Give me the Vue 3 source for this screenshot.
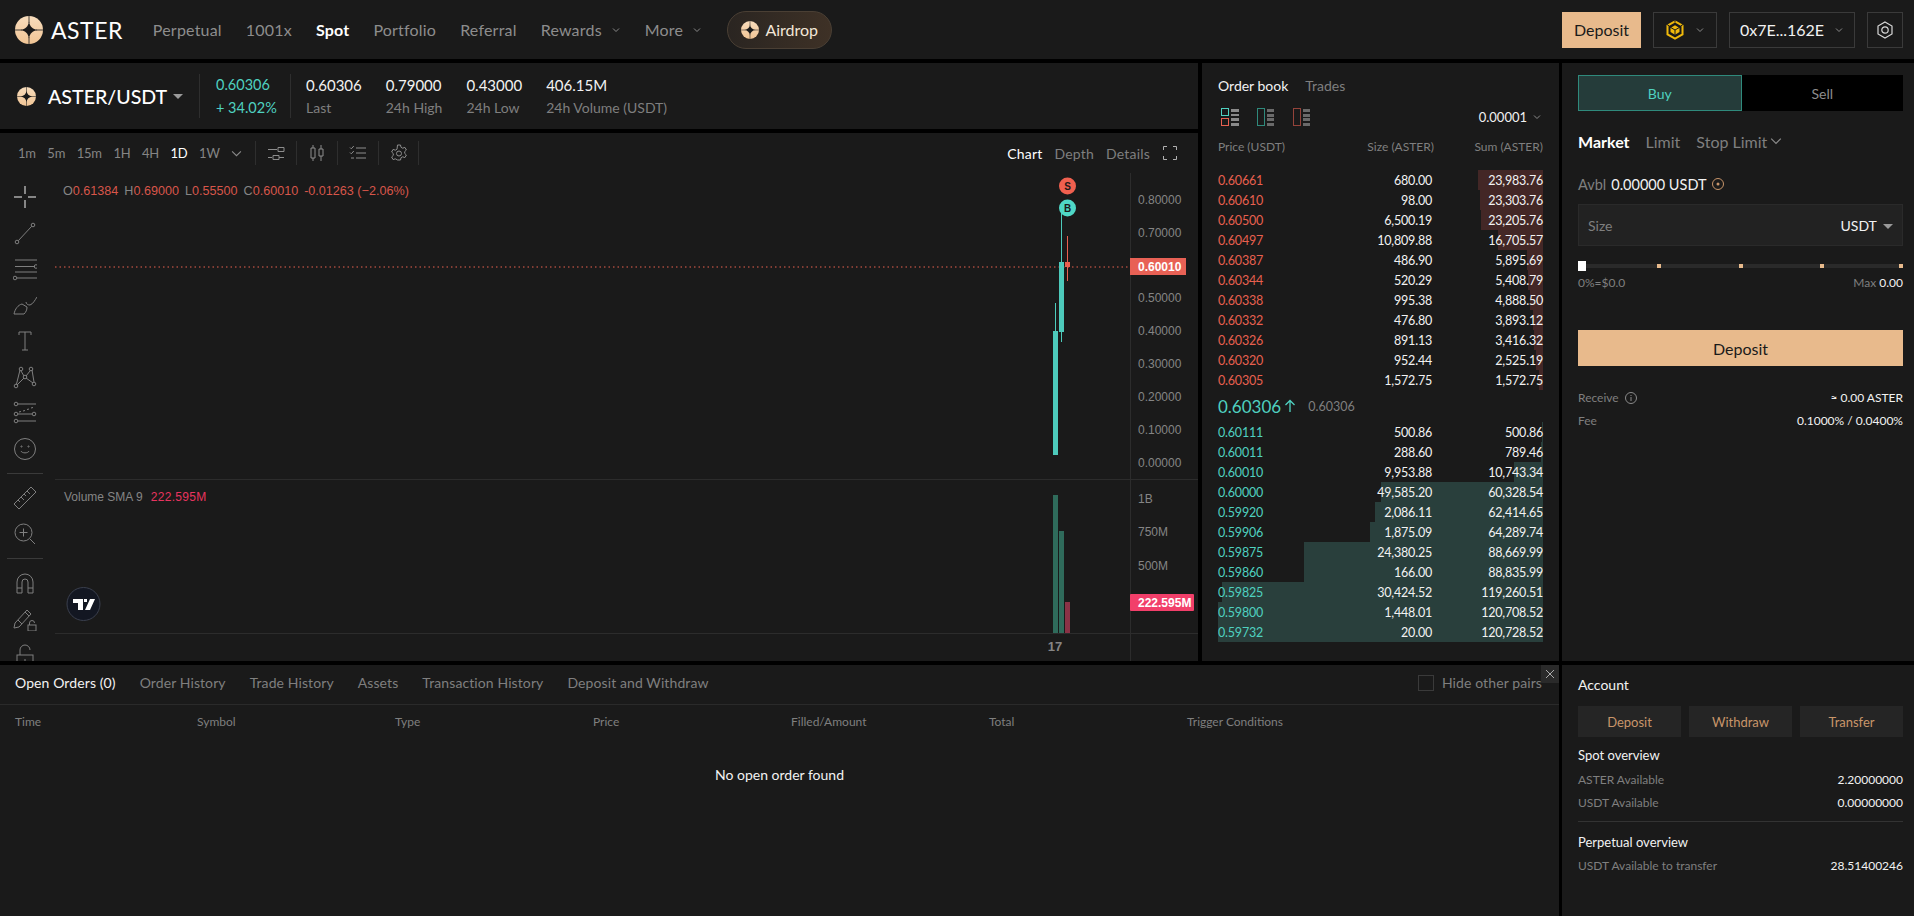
<script setup>
const navItems = [
  { label: 'Perpetual' },
  { label: '1001x' },
  { label: 'Spot', active: true },
  { label: 'Portfolio' },
  { label: 'Referral' },
  { label: 'Rewards', chevron: true },
  { label: 'More', chevron: true }
]

const tickerStats = [
  { value: '0.60306', label: 'Last' },
  { value: '0.79000', label: '24h High' },
  { value: '0.43000', label: '24h Low' },
  { value: '406.15M', label: '24h Volume (USDT)' }
]

const intervals = ['1m', '5m', '15m', '1H', '4H', '1D', '1W']

const priceAxis = [
  { label: '0.80000', y: 200 },
  { label: '0.70000', y: 233 },
  { label: '0.50000', y: 298 },
  { label: '0.40000', y: 331 },
  { label: '0.30000', y: 364 },
  { label: '0.20000', y: 397 },
  { label: '0.10000', y: 430 },
  { label: '0.00000', y: 463 }
]
const volumeAxis = [
  { label: '1B', y: 499 },
  { label: '750M', y: 532 },
  { label: '500M', y: 566 }
]

const maxSum = 120728.52
const asks = [
  ['0.60661', '680.00', '23,983.76'],
  ['0.60610', '98.00', '23,303.76'],
  ['0.60500', '6,500.19', '23,205.76'],
  ['0.60497', '10,809.88', '16,705.57'],
  ['0.60387', '486.90', '5,895.69'],
  ['0.60344', '520.29', '5,408.79'],
  ['0.60338', '995.38', '4,888.50'],
  ['0.60332', '476.80', '3,893.12'],
  ['0.60326', '891.13', '3,416.32'],
  ['0.60320', '952.44', '2,525.19'],
  ['0.60305', '1,572.75', '1,572.75']
]
const bids = [
  ['0.60111', '500.86', '500.86'],
  ['0.60011', '288.60', '789.46'],
  ['0.60010', '9,953.88', '10,743.34'],
  ['0.60000', '49,585.20', '60,328.54'],
  ['0.59920', '2,086.11', '62,414.65'],
  ['0.59906', '1,875.09', '64,289.74'],
  ['0.59875', '24,380.25', '88,669.99'],
  ['0.59860', '166.00', '88,835.99'],
  ['0.59825', '30,424.52', '119,260.51'],
  ['0.59800', '1,448.01', '120,708.52'],
  ['0.59732', '20.00', '120,728.52']
]

function barWidth(sum) {
  return (parseFloat(sum.replace(/,/g, '')) / maxSum) * 100 + '%'
}

const bottomTabs = ['Open Orders (0)', 'Order History', 'Trade History', 'Assets', 'Transaction History', 'Deposit and Withdraw']
const orderColumns = ['Time', 'Symbol', 'Type', 'Price', 'Filled/Amount', 'Total', 'Trigger Conditions']
</script>

<template>
  <div class="page">
    <svg class="sprite">
      <defs>
        <linearGradient id="asterFill" x1="0" y1="0" x2="0" y2="1">
          <stop offset="0" stop-color="#f7dcbc" />
          <stop offset="1" stop-color="#f1c595" />
        </linearGradient>
      </defs>
      <symbol id="asterLogo" viewBox="0 0 28 28">
        <circle cx="14" cy="14" r="14" fill="url(#asterFill)" />
        <path d="M14 5.5C14.8 10.500 17.500 13.200 22.500 14 17.500 14.800 14.800 17.500 14 22.500 13.200 17.500 10.500 14.800 5.500 14 10.500 13.200 13.200 10.500 14 5.500Z" fill="#1a1a1a" />
        <path d="M14 0V7M14 21V28M0 14H7M21 14H28" stroke="#1a1a1a" stroke-width=".8" />
      </symbol>
    </svg>

    <header class="topbar">
      <svg class="logo"><use href="#asterLogo" /></svg>
      <span class="brand">ASTER</span>
      <nav class="nav">
        <a v-for="item in navItems" :key="item.label" class="nav-item" :class="{ active: item.active }">
          {{ item.label }}
          <svg v-if="item.chevron" class="chev" viewBox="0 0 10 10"><path d="M2 3.5l3 3 3-3" /></svg>
        </a>
      </nav>
      <div class="airdrop">
        <svg class="airdrop-logo"><use href="#asterLogo" /></svg>
        Airdrop
      </div>
      <div class="top-right">
        <button class="top-btn-primary">Deposit</button>
        <button class="top-btn bnb">
          <svg class="bnb-icon" viewBox="0 0 20 20">
            <path d="M10 1.3l7.500 4.300v8.800L10 18.700l-7.500-4.300V5.600z" fill="none" stroke="#f0b90b" stroke-width="2" />
            <path d="M10 5.300l4.500 2.600v4.200L10 14.700l-4.500-2.600V7.900z" fill="#f0b90b" />
            <path d="M10 10v5M10 10L5.500 7.400M10 10l4.500-2.600" stroke="#1a1a1a" stroke-width="1" fill="none" />
            <path d="M10 0v2.500M2 4.500l2.200 1.400M18 4.500l-2.200 1.400" stroke="#1a1a1a" stroke-width="1" />
          </svg>
          <svg class="chev" viewBox="0 0 10 10"><path d="M2 3.5l3 3 3-3" /></svg>
        </button>
        <button class="top-btn wallet">
          0x7E...162E
          <svg class="chev" viewBox="0 0 10 10"><path d="M2 3.5l3 3 3-3" /></svg>
        </button>
        <button class="top-btn gear">
          <svg viewBox="0 0 18 18" width="18" height="18" fill="none" stroke="#d8d8d8" stroke-width="1.2">
            <path d="M9 1l7 4v8l-7 4-7-4V5z" />
            <circle cx="9" cy="9" r="3.2" />
          </svg>
        </button>
      </div>
    </header>

    <div class="workspace">
      <div class="left-col">
        <section class="ticker">
          <div class="pair">
            <svg class="pair-logo"><use href="#asterLogo" /></svg>
            <span class="pair-name">ASTER/USDT</span>
            <span class="tri"></span>
          </div>
          <div class="change">
            <span class="up">0.60306</span>
            <span class="up">+ 34.02%</span>
          </div>
          <div class="stats">
            <div v-for="s in tickerStats" :key="s.label" class="stat">
              <span class="stat-val">{{ s.value }}</span>
              <span class="stat-label">{{ s.label }}</span>
            </div>
          </div>
        </section>

        <section class="chart">
          <div class="chart-top">
            <div class="intervals">
              <span v-for="i in intervals" :key="i" class="interval" :class="{ active: i === '1D' }">{{ i }}</span>
              <svg class="chev interval-chev" viewBox="0 0 10 10"><path d="M1 3l4 4 4-4" /></svg>
            </div>
            <div class="tool-cell">
              <svg viewBox="0 0 18 18" class="ti"><path d="M1 5.5h9M1 13.5h4M11 3.5h6v4h-6zM6 11.5h6v4H6zM12 13.5h5" /></svg>
            </div>
            <div class="tool-cell">
              <svg viewBox="0 0 18 18" class="ti"><path d="M5 1v3M3 4h4v10H3zM5 14v3M13 1v4M11 5h4v7h-4zM13 12v5" /></svg>
            </div>
            <div class="tool-cell">
              <svg viewBox="0 0 18 18" class="ti"><path d="M1 3.5l1.300 1.300L4.800 2M7 4h10M1 8.500l1.300 1.300L4.800 7M7 9h10M2 14h3M7 14h10" /></svg>
            </div>
            <div class="tool-cell">
              <svg viewBox="0 0 18 18" class="ti"><path d="M7.5 1h3l.5 2.300 1.700.9 2.200-.8 1.500 2.600-1.700 1.600v1.800l1.700 1.600-1.500 2.600-2.200-.8-1.700.9-.5 2.300h-3L7 15.700l-1.700-.9-2.200.8-1.500-2.600 1.700-1.600V9.600L1.600 8 3.100 5.400l2.200.8L7 5.300z" /><circle cx="9" cy="9.500" r="2.500" /></svg>
            </div>
            <div class="view-tabs">
              <span class="view-tab active">Chart</span>
              <span class="view-tab">Depth</span>
              <span class="view-tab">Details</span>
              <svg viewBox="0 0 14 14" class="fullscreen"><path d="M.5 4V.5H4M10 .5h3.500V4M13.500 10v3.500H10M4 13.500H.5V10" /></svg>
            </div>
          </div>

          <div class="chart-body">
            <div class="draw-tools">
              <svg viewBox="0 0 24 24" class="dt cross"><path d="M12 1v8M12 15v8M1 12h8M15 12h8" /></svg>
              <svg viewBox="0 0 24 24" class="dt"><circle cx="4" cy="21" r="1.800"/><circle cx="20" cy="4" r="1.800"/><path d="M5.300 19.700L18.700 5.300" /></svg>
              <svg viewBox="0 0 24 24" class="dt"><path d="M2 3h22M2 9.500h20M2 15h22M4 21h20" /><circle cx="23" cy="9.500" r="1.800"/><circle cx="2" cy="21" r="1.800"/></svg>
              <svg viewBox="0 0 24 24" class="dt"><path d="M1 21c1-5 4-9 8-10l5 3c0 3-1 5-3 7zM13 9c0 2 2 3 4 3 3-1 5-5 7-8" /></svg>
              <svg viewBox="0 0 24 24" class="dt"><path d="M6 6V3h12v3M12 3v18M9 21h6" /></svg>
              <svg viewBox="0 0 24 24" class="dt"><circle cx="8" cy="4" r="1.800"/><circle cx="18" cy="4" r="1.800"/><circle cx="12" cy="12" r="1.800"/><circle cx="3" cy="21" r="1.800"/><circle cx="21" cy="19" r="1.800"/><path d="M8 6l3 5M17 6l-4 5M7 5L3.500 19M19 5l2 12M4 20l7-7M20 18l-7-5" /></svg>
              <svg viewBox="0 0 24 24" class="dt"><circle cx="3" cy="3" r="1.800"/><circle cx="3" cy="13" r="1.800"/><circle cx="21" cy="13" r="1.800"/><circle cx="3" cy="20" r="1.800"/><path d="M5 3h18M5 13h14M5 20h18M6 11l2-.5M10 10l2-.5M14 8.500l2-.5M18 7l2-.5" /></svg>
              <svg viewBox="0 0 24 24" class="dt"><circle cx="12" cy="12" r="10.500"/><circle cx="8.500" cy="9.500" r=".6"/><circle cx="15.500" cy="9.500" r=".6"/><path d="M8 14c1 2.500 7 2.500 8 0" /></svg>
              <div class="dt-sep"></div>
              <svg viewBox="0 0 24 24" class="dt"><path d="M1 18L18 1l5 5L6 23zM5 14l2 2M8 11l3 3M11 8l2 2M14 5l3 3" /></svg>
              <svg viewBox="0 0 24 24" class="dt"><circle cx="10.500" cy="10.500" r="8.500"/><path d="M10.500 6.500v8M6.500 10.500h8M17 17l5 5" /></svg>
              <div class="dt-sep"></div>
              <svg viewBox="0 0 24 24" class="dt"><path d="M4 22v-11a8 8 0 0 1 16 0v11h-5V11a3 3 0 0 0-6 0v11zM4 17h5M15 17h5" /></svg>
              <svg viewBox="0 0 24 24" class="dt"><path d="M2 16L14 3l4 4L6 20l-5 1zM5 13l4 4M12 5l4 4" /><rect x="15" y="18" width="8" height="6"/><path d="M16.500 18v-2a2.500 2.500 0 0 1 5 0" /></svg>
              <svg viewBox="0 0 24 24" class="dt"><rect x="4" y="12" width="16" height="12"/><path d="M7 12V7a5 5 0 0 1 10 0M12 16v4" /></svg>
            </div>

            <svg class="plot" width="1143" height="528" viewBox="55 133 1143 528">
              <path d="M55 479.500H1198M55 633.500H1198M1130.500 173V661" stroke="#2c2c2c" fill="none" />
              <path d="M55 267H1130" stroke="#e8604f" stroke-dasharray="1.500 3" fill="none" />

              <text x="63" y="195" class="ohlc"><tspan class="k">O</tspan><tspan class="v">0.61384</tspan><tspan class="k" dx="6">H</tspan><tspan class="v">0.69000</tspan><tspan class="k" dx="6">L</tspan><tspan class="v">0.55500</tspan><tspan class="k" dx="6">C</tspan><tspan class="v">0.60010</tspan><tspan class="v" dx="6">-0.01263 (−2.06%)</tspan></text>
              <text x="64" y="501" class="vol"><tspan class="k">Volume SMA 9</tspan><tspan class="pink" dx="8">222.595M</tspan></text>

              <!-- candles -->
              <rect x="1055" y="303" width="1" height="28" fill="#4dcabb" />
              <rect x="1053" y="331" width="5" height="124" fill="#4dcabb" />
              <rect x="1061" y="212" width="1" height="130" fill="#4dcabb" />
              <rect x="1059" y="262" width="5" height="70" fill="#4dcabb" />
              <rect x="1067" y="236" width="1" height="45" fill="#e8604f" />
              <rect x="1065" y="262" width="5" height="5" fill="#e8604f" />

              <circle cx="1067.500" cy="186" r="8.500" fill="#f0604f" />
              <text x="1067.500" y="190" class="mark">S</text>
              <circle cx="1067.500" cy="208" r="8.500" fill="#4fd8c6" />
              <text x="1067.500" y="212" class="mark">B</text>

              <!-- volume -->
              <rect x="1053" y="495" width="5" height="138" fill="#2f6b5b" />
              <rect x="1059" y="531" width="5" height="102" fill="#2f6b5b" />
              <rect x="1065" y="602" width="5" height="31" fill="#8a3246" />

              <text v-for="p in priceAxis" :key="p.label" x="1138" :y="p.y + 4" class="axis">{{ p.label }}</text>
              <text v-for="p in volumeAxis" :key="p.label" x="1138" :y="p.y + 4" class="axis">{{ p.label }}</text>

              <rect x="1130" y="258" width="56" height="17" fill="#e86155" />
              <text x="1138" y="271" class="flag">0.60010</text>
              <rect x="1130" y="594" width="64" height="17" rx="1" fill="#f23f6a" />
              <text x="1138" y="607" class="flag">222.595M</text>

              <text x="1055" y="651" class="time">17</text>

              <circle cx="83.500" cy="604" r="16.500" fill="#131722" stroke="#3a3f4d" />
              <path d="M73 599h10v11h-5v-7h-5zM84 599h3v3h-3zM90 599h5l-5 11h-5z" fill="#fff" />
              <path d="M51 586l-3 3 3 3" fill="none" stroke="#9a9a9a" />
            </svg>
          </div>
        </section>
      </div>

      <section class="book">
        <div class="book-tabs">
          <span class="book-tab active">Order book</span>
          <span class="book-tab">Trades</span>
        </div>
        <div class="book-tools">
          <svg class="book-ico" viewBox="0 0 18 18">
            <rect x=".5" y=".5" width="7" height="7" fill="none" stroke="#4fd1c0" />
            <rect x=".5" y="10.500" width="7" height="7" fill="none" stroke="#e8604f" />
            <path d="M10 1h8v3h-8zM10 6h8v2h-8zM10 10h8v3h-8zM10 15h8v3h-8z" fill="#8a8a8a" />
          </svg>
          <svg class="book-ico" viewBox="0 0 18 18">
            <rect x=".5" y=".5" width="7" height="17" fill="none" stroke="#2f8a7c" />
            <path d="M10 1h7v3h-7zM10 6h7v3h-7zM10 10h7v3h-7zM10 15h7v3h-7z" fill="#6a6a6a" />
          </svg>
          <svg class="book-ico" viewBox="0 0 18 18">
            <rect x=".5" y=".5" width="7" height="17" fill="none" stroke="#94433a" />
            <path d="M10 1h7v3h-7zM10 6h7v3h-7zM10 10h7v3h-7zM10 15h7v3h-7z" fill="#6a6a6a" />
          </svg>
          <span class="precision">0.00001
            <svg class="chev" viewBox="0 0 10 10"><path d="M2 3.5l3 3 3-3" /></svg>
          </span>
        </div>
        <div class="book-head">
          <span>Price (USDT)</span>
          <span class="head-r">Size (ASTER)</span>
          <span class="head-r">Sum (ASTER)</span>
        </div>
        <div class="rows asks">
          <div v-for="row in asks" :key="row[0]" class="row">
            <div class="bar ask-bar" :style="{ width: barWidth(row[2]) }"></div>
            <span class="price down">{{ row[0] }}</span>
            <span class="size">{{ row[1] }}</span>
            <span class="sum">{{ row[2] }}</span>
          </div>
        </div>
        <div class="mid">
          <span class="mid-price">0.60306</span>
          <svg viewBox="0 0 12 14" class="mid-arrow"><path d="M6 13V1.500M1.500 6L6 1.500 10.500 6" /></svg>
          <span class="mid-mark">0.60306</span>
        </div>
        <div class="rows">
          <div v-for="row in bids" :key="row[0]" class="row">
            <div class="bar bid-bar" :style="{ width: barWidth(row[2]) }"></div>
            <span class="price up">{{ row[0] }}</span>
            <span class="size">{{ row[1] }}</span>
            <span class="sum">{{ row[2] }}</span>
          </div>
        </div>
      </section>

      <section class="trade">
        <div class="side-switch">
          <div class="side buy">Buy</div>
          <div class="side sell">Sell</div>
        </div>
        <div class="order-types">
          <span class="otype active">Market</span>
          <span class="otype">Limit</span>
          <span class="otype">Stop Limit
            <svg class="chev otype-chev" viewBox="0 0 10 10"><path d="M1 3l4 4 4-4" /></svg>
          </span>
        </div>
        <div class="avbl">
          <span class="muted">Avbl</span>
          <span>0.00000 USDT</span>
          <svg viewBox="0 0 12 12" width="12" height="12"><circle cx="6" cy="6" r="5.500" fill="none" stroke="#c8956a" /><circle cx="6" cy="6" r="1.500" fill="#c8956a" /></svg>
        </div>
        <div class="size-input">
          <span class="muted">Size</span>
          <span class="unit">USDT <span class="tri small"></span></span>
        </div>
        <div class="slider">
          <i class="tick" style="left: 79px"></i>
          <i class="tick" style="left: 161px"></i>
          <i class="tick" style="left: 242px"></i>
          <i class="tick" style="left: 321px"></i>
          <i class="thumb"></i>
        </div>
        <div class="slider-info">
          <span class="muted">0%=$0.0</span>
          <span><span class="muted">Max</span> 0.00</span>
        </div>
        <button class="big-deposit">Deposit</button>
        <div class="kv first">
          <span class="muted receive">Receive
            <svg viewBox="0 0 12 12" width="12" height="12"><circle cx="6" cy="6" r="5.500" fill="none" stroke="#8a8a8a" /><path d="M6 5v4M6 3v1" stroke="#8a8a8a" /></svg>
          </span>
          <span>≈ 0.00 ASTER</span>
        </div>
        <div class="kv">
          <span class="muted">Fee</span>
          <span>0.1000% / 0.0400%</span>
        </div>
      </section>

      <section class="orders">
        <div class="orders-tabs">
          <span v-for="(t, i) in bottomTabs" :key="t" class="otab" :class="{ active: i === 0 }">{{ t }}</span>
          <label class="hide-pairs"><i class="box"></i>Hide other pairs</label>
        </div>
        <button class="close-x">
          <svg viewBox="0 0 10 10" width="10" height="10"><path d="M1 1l8 8M9 1l-8 8" stroke="#aaa" /></svg>
        </button>
        <div class="orders-head">
          <span v-for="c in orderColumns" :key="c">{{ c }}</span>
        </div>
        <div class="empty">No open order found</div>
      </section>

      <section class="account">
        <h3 class="acc-title">Account</h3>
        <div class="acc-btns">
          <button>Deposit</button>
          <button>Withdraw</button>
          <button>Transfer</button>
        </div>
        <div class="acc-sub">Spot overview</div>
        <div class="acc-row"><span class="muted">ASTER Available</span><span>2.20000000</span></div>
        <div class="acc-row"><span class="muted">USDT Available</span><span>0.00000000</span></div>
        <div class="acc-sep"></div>
        <div class="acc-sub">Perpetual overview</div>
        <div class="acc-row"><span class="muted">USDT Available to transfer</span><span>28.51400246</span></div>
      </section>
    </div>
  </div>
</template>

<style>
html, body {
  margin: 0;
  background: #000;
}
</style>

<style scoped>
.page {
  position: relative;
  width: 1914px;
  height: 916px;
  overflow: hidden;
  background: #000;
  color: #f2f2f2;
  font-family: Lato, "Noto Sans", sans-serif;
  display: flex;
  flex-direction: column;
  gap: 4px;
}

.sprite {
  position: absolute;
  width: 0;
  height: 0;
}

button {
  font-family: inherit;
  cursor: pointer;
}

.chev {
  width: 10px;
  height: 10px;
  flex: none;
  fill: none;
  stroke: #8a8a8a;
  stroke-width: 1;
}

.muted {
  color: #7f7f7f;
}

/* top bar */
.topbar {
  height: 59px;
  flex: none;
  background: #1a1a1a;
  display: flex;
  align-items: center;
  padding-left: 15px;
}

.logo {
  width: 28px;
  height: 28px;
}

.brand {
  margin-left: 8px;
  font-size: 23px;
  letter-spacing: 0.5px;
  color: #fff;
}

.nav {
  display: flex;
  align-items: center;
  margin-left: 30px;
  gap: 24px;
}

.nav-item {
  font-size: 16px;
  letter-spacing: 0.2px;
  color: #8d8d8d;
  display: flex;
  align-items: center;
  gap: 9px;
}

.nav-item.active {
  color: #fff;
  font-weight: 700;
}

.airdrop {
  margin-left: 25px;
  width: 105px;
  height: 38px;
  box-sizing: border-box;
  border-radius: 19px;
  border: 1px solid #4a3f34;
  background: linear-gradient(90deg, #2a2521, #3e3126);
  display: flex;
  align-items: center;
  justify-content: center;
  gap: 6px;
  font-size: 16px;
  color: #f2e6d8;
}

.airdrop-logo {
  width: 18px;
  height: 18px;
}

.top-right {
  margin-left: auto;
  padding-right: 11px;
  display: flex;
  gap: 12px;
}

.top-btn-primary {
  width: 79px;
  height: 36px;
  border: 0;
  background: #e8ba8c;
  color: #1a1a1a;
  font-size: 16px;
}

.top-btn {
  height: 36px;
  box-sizing: border-box;
  background: transparent;
  border: 1px solid #3a3a3a;
  color: #f2f2f2;
  display: flex;
  align-items: center;
  justify-content: center;
  font-size: 16px;
}

.bnb {
  width: 64px;
  gap: 10px;
}

.bnb-icon {
  width: 20px;
  height: 20px;
}

.wallet {
  width: 126px;
  gap: 10px;
}

.gear {
  width: 36px;
}

/* main grid */
.workspace {
  flex: 1;
  min-height: 0;
  display: grid;
  grid-template-columns: 1198px 358px 352px;
  grid-template-rows: 598px 251px;
  column-gap: 3px;
  row-gap: 4px;
}

.left-col {
  display: flex;
  flex-direction: column;
  gap: 4px;
}

/* ticker */
.ticker {
  height: 66px;
  flex: none;
  background: #1a1a1a;
  display: flex;
  align-items: center;
  padding-left: 17px;
}

.pair {
  display: flex;
  align-items: center;
  width: 182px;
}

.pair-logo {
  width: 19px;
  height: 19px;
}

.pair-name {
  margin-left: 12px;
  font-size: 19.6px;
  font-weight: 500;
  color: #fff;
}

.tri {
  display: inline-block;
  margin-left: 6px;
  border-left: 5px solid transparent;
  border-right: 5px solid transparent;
  border-top: 5px solid #9a9a9a;
}

.change {
  height: 44px;
  box-sizing: border-box;
  padding: 2px 0 2px 16px;
  border-left: 1px solid #2e2e2e;
  border-right: 1px solid #2e2e2e;
  width: 92px;
  display: flex;
  flex-direction: column;
  justify-content: space-between;
  font-size: 14.5px;
}

.up {
  color: #4fd1c0;
}

.down {
  color: #e8604f;
}

.stats {
  display: flex;
  margin-left: 15px;
  gap: 24px;
}

.stat {
  display: flex;
  flex-direction: column;
  gap: 5px;
  font-size: 15px;
}

.stat-val {
  color: #f2f2f2;
}

.stat-label {
  color: #7f7f7f;
  font-size: 14px;
}

/* chart */
.chart {
  flex: 1;
  min-height: 0;
  background: #1a1a1a;
  display: flex;
  flex-direction: column;
  overflow: hidden;
}

.chart-top {
  height: 40px;
  flex: none;
  display: flex;
  align-items: center;
  padding-left: 18px;
}

.intervals {
  display: flex;
  align-items: center;
  gap: 11.5px;
  width: 237px;
  font-size: 13px;
  letter-spacing: -0.2px;
}

.interval {
  color: #858585;
}

.interval.active {
  color: #fff;
}

.interval-chev {
  width: 11px;
  height: 11px;
}

.tool-cell {
  width: 41px;
  height: 24px;
  box-sizing: border-box;
  border-left: 1px solid #2e2e2e;
  display: flex;
  align-items: center;
  justify-content: center;
}

.tool-cell:nth-child(5) {
  border-right: 1px solid #2e2e2e;
}

.ti {
  width: 18px;
  height: 18px;
  fill: none;
  stroke: #8d8d8d;
  stroke-width: 1;
}

.view-tabs {
  margin-left: auto;
  padding-right: 21px;
  display: flex;
  align-items: center;
  gap: 12px;
  font-size: 14px;
  letter-spacing: 0.2px;
}

.view-tab {
  color: #7f7f7f;
}

.view-tab.active {
  color: #fff;
}

.fullscreen {
  width: 14px;
  height: 14px;
  fill: none;
  stroke: #b0b0b0;
  margin-left: 1px;
}

.chart-body {
  flex: 1;
  min-height: 0;
  position: relative;
}

.draw-tools {
  width: 50px;
  padding-top: 12px;
  display: flex;
  flex-direction: column;
  align-items: center;
  gap: 12px;
}

.dt {
  width: 24px;
  height: 24px;
  flex: none;
  fill: none;
  stroke: #7f7f7f;
  stroke-width: 1;
}

.dt.cross {
  stroke: #f2f2f2;
}

.dt-sep {
  width: 36px;
  height: 1px;
  background: #3a3a3a;
  flex: none;
}

/* the plot is a free canvas, everything in it sits at chart coordinates */
.plot {
  position: absolute;
  left: 55px;
  top: -40px;
  pointer-events: none;
}

.ohlc {
  font-family: "Liberation Sans", sans-serif;
  font-size: 12.6px;
}

.vol {
  font-family: "Liberation Sans", sans-serif;
  font-size: 12px;
}

.k {
  fill: #858585;
}

.v {
  fill: #d8564a;
}

.pink {
  fill: #e8345f;
  letter-spacing: 0.3px;
}

.mark {
  font-family: "Liberation Sans", sans-serif;
  font-size: 10px;
  font-weight: 700;
  text-anchor: middle;
  fill: #1a1a1a;
}

.axis {
  font-family: "Liberation Sans", sans-serif;
  font-size: 12px;
  fill: #858585;
}

.flag {
  font-family: "Liberation Sans", sans-serif;
  font-size: 12px;
  font-weight: 700;
  fill: #fff;
}

.time {
  font-family: "Liberation Sans", sans-serif;
  font-size: 13px;
  font-weight: 700;
  text-anchor: middle;
  fill: #858585;
}

/* order book */
.book {
  grid-column: 2;
  grid-row: 1;
  background: #1a1a1a;
  margin-left: 1px;
  padding: 0 16px;
}

.book-tabs {
  display: flex;
  gap: 17px;
  height: 44px;
  align-items: center;
  font-size: 14px;
}

.book-tab {
  color: #7f7f7f;
}

.book-tab.active {
  color: #f2f2f2;
}

.book-tools {
  display: flex;
  align-items: center;
  height: 20px;
  padding-left: 3px;
  gap: 18px;
}

.book-ico {
  width: 18px;
  height: 18px;
}

.precision {
  margin-left: auto;
  display: flex;
  align-items: center;
  gap: 5px;
  font-size: 13px;
  padding-right: 1px;
}

.book-head {
  margin-top: 9px;
  height: 20px;
  display: grid;
  grid-template-columns: 100px 116px 109px;
  align-items: center;
  font-size: 12px;
  color: #7f7f7f;
}

.head-r {
  text-align: right;
}

.rows {
  display: flex;
  flex-direction: column;
}

.asks {
  margin-top: 14px;
}

.row {
  position: relative;
  height: 20px;
  display: grid;
  grid-template-columns: 100px 114px 111px;
  align-items: center;
  font-size: 12.5px;
  letter-spacing: -0.2px;
}

.bar {
  position: absolute;
  right: 0;
  top: 0;
  bottom: 0;
}

.ask-bar {
  background: #432726;
}

.bid-bar {
  background: #293f3c;
}

.price, .size, .sum {
  position: relative;
}

.size, .sum {
  text-align: right;
  color: #f2f2f2;
}

.mid {
  height: 32px;
  display: flex;
  align-items: center;
}

.mid-price {
  font-size: 17px;
  color: #4fd1c0;
}

.mid-arrow {
  width: 12px;
  height: 14px;
  margin-left: 3px;
  fill: none;
  stroke: #4fd1c0;
  stroke-width: 1.3;
}

.mid-mark {
  margin-left: 12px;
  font-size: 12.5px;
  color: #7f7f7f;
}

/* order form */
.trade {
  grid-column: 3;
  grid-row: 1;
  background: #1a1a1a;
  padding: 12px 11px 0 16px;
  font-size: 14px;
}

.side-switch {
  display: flex;
  height: 36px;
}

.side {
  flex: 1;
  display: flex;
  align-items: center;
  justify-content: center;
  font-size: 14px;
  box-sizing: border-box;
}

.buy {
  background: #253c3a;
  border: 1px solid #2f8a7c;
  color: #4fd1c0;
}

.sell {
  background: #000;
  color: #8d8d8d;
}

.order-types {
  margin-top: 19px;
  display: flex;
  align-items: center;
  gap: 16px;
  height: 22px;
  font-size: 16px;
}

.otype {
  color: #7f7f7f;
  display: flex;
  align-items: center;
  gap: 3px;
}

.otype.active {
  color: #fff;
  font-weight: 700;
}

.otype-chev {
  width: 12px;
  height: 12px;
}

.avbl {
  margin-top: 22px;
  display: flex;
  align-items: center;
  gap: 5px;
  height: 20px;
  font-size: 14.5px;
}

.size-input {
  margin-top: 10px;
  height: 42px;
  box-sizing: border-box;
  background: #222;
  border: 1px solid #2a2a2a;
  padding: 0 9px;
  display: flex;
  align-items: center;
  justify-content: space-between;
  font-size: 14px;
}

.unit {
  color: #f2f2f2;
}

.tri.small {
  margin-left: 3px;
  vertical-align: 2px;
}

.slider {
  position: relative;
  margin-top: 18px;
  height: 4px;
  background: #2a2a2a;
}

.tick {
  position: absolute;
  top: 0;
  width: 4px;
  height: 4px;
  background: #e8ba8c;
}

.thumb {
  position: absolute;
  left: 0;
  top: -3px;
  width: 8px;
  height: 10px;
  background: #fff;
}

.slider-info {
  margin-top: 7px;
  display: flex;
  justify-content: space-between;
  font-size: 12px;
}

.big-deposit {
  display: block;
  width: 100%;
  margin-top: 40px;
  height: 36px;
  border: 0;
  background: #e8ba8c;
  color: #1a1a1a;
  font-size: 16px;
}

.kv {
  display: flex;
  justify-content: space-between;
  align-items: center;
  height: 23px;
  font-size: 12px;
}

.kv.first {
  margin-top: 20px;
}

.receive {
  display: flex;
  align-items: center;
  gap: 6px;
}

/* open orders */
.orders {
  grid-column: 1 / 3;
  grid-row: 2;
  position: relative;
  background: #1a1a1a;
}

.orders-tabs {
  height: 40px;
  box-sizing: border-box;
  border-bottom: 1px solid #2a2a2a;
  display: flex;
  align-items: center;
  padding: 0 0 4px 15px;
  gap: 24px;
  font-size: 14px;
  letter-spacing: 0.1px;
}

.otab {
  color: #7f7f7f;
}

.otab.active {
  color: #f2f2f2;
}

.hide-pairs {
  margin-left: auto;
  margin-right: 17px;
  display: flex;
  align-items: center;
  gap: 8px;
  color: #7f7f7f;
}

.box {
  width: 14px;
  height: 14px;
  border: 1px solid #3a3a3a;
}

.close-x {
  position: absolute;
  right: 0;
  top: 0;
  width: 18px;
  height: 18px;
  padding: 0;
  border: 0;
  background: #2a2a2a;
  display: flex;
  align-items: center;
  justify-content: center;
}

.orders-head {
  display: grid;
  grid-template-columns: 182px repeat(6, 198px);
  padding: 9px 15px 0;
  font-size: 12px;
  color: #7f7f7f;
}

.empty {
  margin-top: 37px;
  text-align: center;
  font-size: 14px;
  color: #f2f2f2;
}

/* account */
.account {
  grid-column: 3;
  grid-row: 2;
  background: #1a1a1a;
  padding: 11px 11px 0 16px;
  font-size: 12px;
}

.acc-title {
  margin: 0;
  font-size: 14px;
  font-weight: 400;
  color: #f2f2f2;
}

.acc-btns {
  margin-top: 13px;
  display: grid;
  grid-template-columns: repeat(3, 103px);
  gap: 8px;
}

.acc-btns button {
  height: 31px;
  border: 0;
  background: #252525;
  color: #c8956a;
  font-size: 13px;
}

.acc-sub {
  margin-top: 11px;
  font-size: 13px;
  color: #f2f2f2;
}

.acc-btns + .acc-sub {
  margin-top: 10px;
  margin-bottom: 9px;
}

.acc-row {
  display: flex;
  justify-content: space-between;
  margin-top: 8px;
  font-size: 12px;
  color: #f2f2f2;
}

.acc-btns + .acc-sub + .acc-row {
  margin-top: 0;
}

.acc-sep {
  margin-top: 11px;
  height: 1px;
  background: #333;
}

.acc-sep + .acc-sub {
  margin-top: 12px;
}
</style>
